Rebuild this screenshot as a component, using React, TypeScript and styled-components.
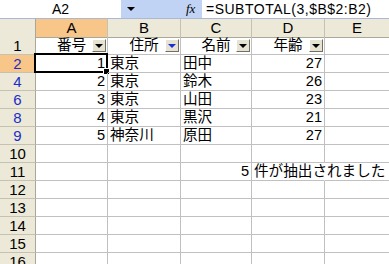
import { Fragment } from 'react';
import styled, { createGlobalStyle } from 'styled-components';

const GlobalStyle = createGlobalStyle`
  html, body {
    margin: 0;
    padding: 0;
    background: #ffffff;
    overflow: hidden;
  }
`;

const Window = styled.div`
  width: 389px;
  height: 264px;
  overflow: hidden;
  font-family: 'Liberation Sans', 'Noto Sans CJK JP', sans-serif;
  font-size: 14px;
  color: #000;
`;

const FormulaBar = styled.div`
  display: flex;
  height: 18px;
  border-bottom: 1px solid #a9b8d6;
  background: #c1d3f5;
`;

const NameBox = styled.div`
  width: 121px;
  background: #fff;
  display: flex;
  align-items: center;
  justify-content: center;
  line-height: 17px;
`;

const NameDrop = styled.div`
  width: 20px;
  display: flex;
  align-items: center;
  justify-content: center;
`;

const Triangle = styled.span<{ $color?: string }>`
  width: 0;
  height: 0;
  border-left: 4px solid transparent;
  border-right: 4px solid transparent;
  border-top: 4px solid ${(p) => p.$color || '#000'};
`;

const FxLabel = styled.div`
  margin-left: 45px;
  width: 16px;
  font-family: 'Liberation Serif', serif;
  font-style: italic;
  font-size: 13px;
  line-height: 18px;
`;

const FormulaInput = styled.div`
  flex: 1;
  background: #fff;
  padding-left: 4px;
  line-height: 18px;
  letter-spacing: 0.5px;
  white-space: nowrap;
`;

const Sheet = styled.div`
  display: grid;
  grid-template-columns: 36px 72px 73px 71px 73px 65px;
  grid-auto-rows: 18px;
`;

const Corner = styled.div`
  height: 19px;
  background: #ece9d8;
  border-right: 1px solid #aca899;
  border-bottom: 1px solid #aca899;
  box-sizing: border-box;
`;

const ColHead = styled.div<{ $active?: boolean }>`
  height: 19px;
  box-sizing: border-box;
  background: ${(p) => (p.$active ? '#f9c68a' : '#ece9d8')};
  border-right: 1px solid #c5c2b2;
  border-bottom: 1px solid #aca899;
  text-align: center;
  line-height: 18px;
  font-size: 15px;
`;

const RowHead = styled.div<{ $active?: boolean; $filtered?: boolean }>`
  box-sizing: border-box;
  background: ${(p) => (p.$active ? '#f9c68a' : '#ece9d8')};
  border-right: 1px solid #aca899;
  border-bottom: 1px solid #c5c2b2;
  color: ${(p) => (p.$filtered ? '#1a2fc8' : '#000')};
  text-align: center;
  line-height: 17px;
  font-size: 15px;
`;

const Cell = styled.div<{ $align?: 'left' | 'right' | 'center'; $open?: boolean }>`
  position: relative;
  box-sizing: border-box;
  border-right: 1px solid ${(p) => (p.$open ? 'transparent' : '#c0c0c0')};
  border-bottom: 1px solid #c0c0c0;
  text-align: ${(p) => p.$align || 'left'};
  padding: 0 2px;
  font-size: 14.6px;
  line-height: 17px;
  white-space: nowrap;
`;

const Selection = styled.div`
  position: absolute;
  left: -2px;
  top: -2px;
  right: -1px;
  bottom: -1px;
  border: 2px solid #000;
  pointer-events: none;

  &::after {
    content: '';
    position: absolute;
    right: -4px;
    bottom: -4px;
    width: 5px;
    height: 5px;
    background: #000;
    border: 1px solid #fff;
  }
`;

const FilterButton = styled.span`
  position: absolute;
  right: 1px;
  top: 2px;
  width: 14px;
  height: 13px;
  box-sizing: border-box;
  background: #e6e3d3;
  border: 1px solid;
  border-color: #fff #716f64 #716f64 #fff;
  display: flex;
  align-items: center;
  justify-content: center;
`;

type Value = string | number;

const rows: { n: number; filtered?: boolean; cells: Value[] }[] = [
  { n: 2, filtered: true, cells: [1, '東京', '田中', 27, ''] },
  { n: 4, filtered: true, cells: [2, '東京', '鈴木', 26, ''] },
  { n: 6, filtered: true, cells: [3, '東京', '山田', 23, ''] },
  { n: 8, filtered: true, cells: [4, '東京', '黒沢', 21, ''] },
  { n: 9, filtered: true, cells: [5, '神奈川', '原田', 27, ''] },
  { n: 10, cells: ['', '', '', '', ''] },
  { n: 11, cells: ['', '', 5, '件が抽出されました', ''] },
  { n: 12, cells: ['', '', '', '', ''] },
  { n: 13, cells: ['', '', '', '', ''] },
  { n: 14, cells: ['', '', '', '', ''] },
  { n: 15, cells: ['', '', '', '', ''] },
  { n: 16, cells: ['', '', '', '', ''] },
];

const columns = ['A', 'B', 'C', 'D', 'E'];
const headers = ['番号', '住所', '名前', '年齢'];

const App = () => {
  return (
    <>
      <GlobalStyle />
      <Window>
        <FormulaBar>
          <NameBox>A2</NameBox>
          <NameDrop>
            <Triangle />
          </NameDrop>
          <FxLabel>fx</FxLabel>
          <FormulaInput>=SUBTOTAL(3,$B$2:B2)</FormulaInput>
        </FormulaBar>
        <Sheet>
          <Corner />
          {columns.map((c) => (
            <ColHead key={c} $active={c === 'A'}>
              {c}
            </ColHead>
          ))}

          <RowHead>1</RowHead>
          {headers.map((h, i) => (
            <Cell key={h} $align="center">
              {h}
              <FilterButton>
                <Triangle $color={i === 1 ? '#1a2fd8' : '#000'} />
              </FilterButton>
            </Cell>
          ))}
          <Cell />

          {rows.map((row) => (
            <Fragment key={row.n}>
              <RowHead $active={row.n === 2} $filtered={row.filtered}>
                {row.n}
              </RowHead>
              {row.cells.map((v, i) => (
                <Cell
                  key={i}
                  $align={typeof v === 'number' ? 'right' : 'left'}
                  $open={row.n === 11 && i === 3}
                >
                  {v}
                  {row.n === 2 && i === 0 && <Selection />}
                </Cell>
              ))}
            </Fragment>
          ))}
        </Sheet>
      </Window>
    </>
  );
};

export default App;
